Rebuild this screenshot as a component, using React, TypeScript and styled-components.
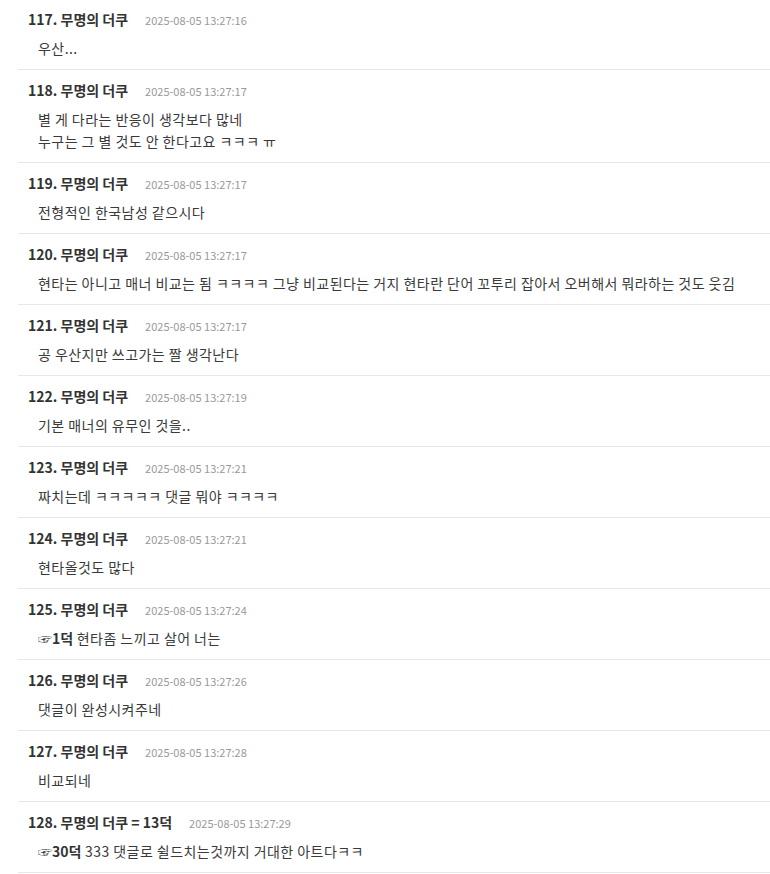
import React from "react";
import styled, { createGlobalStyle } from "styled-components";

const GlobalStyle = createGlobalStyle`
  body {
    margin: 0;
    background: #fff;
    font-family: "Noto Sans CJK KR", "Noto Sans", sans-serif;
  }
`;

const List = styled.ul`
  list-style: none;
  margin: 0;
  padding: 0 0 0 18px;
`;

const Item = styled.li`
  padding: 11px 10px 10px;
  border-bottom: 1px solid #e8e8e8;

  &:first-child {
    padding-top: 10px;
  }
`;

const Header = styled.div`
  display: flex;
  align-items: baseline;
  gap: 17px;
  height: 18px;
  line-height: 18px;
`;

const Author = styled.span`
  font-size: 14px;
  font-weight: bold;
  color: #333;
`;

const Stamp = styled.span`
  font-size: 11px;
  color: #999;
`;

const Body = styled.div`
  margin-top: 9px;
  padding-left: 10px;
  font-size: 14px;
  letter-spacing: 0.45px;
  line-height: 22px;
  color: #3a3a3a;
`;

const Ref = styled.b`
  font-weight: bold;
  letter-spacing: 0;
  color: #333;
`;

type Comment = {
  no: number;
  name: string;
  time: string;
  ref?: string;
  lines: string[];
};

const comments: Comment[] = [
  { no: 117, name: "무명의 더쿠", time: "2025-08-05 13:27:16", lines: ["우산..."] },
  {
    no: 118,
    name: "무명의 더쿠",
    time: "2025-08-05 13:27:17",
    lines: ["별 게 다라는 반응이 생각보다 많네", "누구는 그 별 것도 안 한다고요 ㅋㅋㅋ ㅠ"],
  },
  { no: 119, name: "무명의 더쿠", time: "2025-08-05 13:27:17", lines: ["전형적인 한국남성 같으시다"] },
  {
    no: 120,
    name: "무명의 더쿠",
    time: "2025-08-05 13:27:17",
    lines: ["현타는 아니고 매너 비교는 됨 ㅋㅋㅋㅋ 그냥 비교된다는 거지 현타란 단어 꼬투리 잡아서 오버해서 뭐라하는 것도 웃김"],
  },
  { no: 121, name: "무명의 더쿠", time: "2025-08-05 13:27:17", lines: ["공 우산지만 쓰고가는 짤 생각난다"] },
  { no: 122, name: "무명의 더쿠", time: "2025-08-05 13:27:19", lines: ["기본 매너의 유무인 것을.."] },
  { no: 123, name: "무명의 더쿠", time: "2025-08-05 13:27:21", lines: ["짜치는데 ㅋㅋㅋㅋㅋ 댓글 뭐야 ㅋㅋㅋㅋ"] },
  { no: 124, name: "무명의 더쿠", time: "2025-08-05 13:27:21", lines: ["현타올것도 많다"] },
  { no: 125, name: "무명의 더쿠", time: "2025-08-05 13:27:24", ref: "☞1덕", lines: [" 현타좀 느끼고 살어 너는"] },
  { no: 126, name: "무명의 더쿠", time: "2025-08-05 13:27:26", lines: ["댓글이 완성시켜주네"] },
  { no: 127, name: "무명의 더쿠", time: "2025-08-05 13:27:28", lines: ["비교되네"] },
  {
    no: 128,
    name: "무명의 더쿠 = 13덕",
    time: "2025-08-05 13:27:29",
    ref: "☞30덕",
    lines: [" 333 댓글로 쉴드치는것까지 거대한 아트다ㅋㅋ"],
  },
];

export default function App() {
  return (
    <>
      <GlobalStyle />
      <List>
        {comments.map((c) => (
          <Item key={c.no}>
            <Header>
              <Author>
                {c.no}. {c.name}
              </Author>
              <Stamp>{c.time}</Stamp>
            </Header>
            <Body>
              {c.lines.map((line, i) => (
                <div key={i}>
                  {i === 0 && c.ref && <Ref>{c.ref}</Ref>}
                  {line}
                </div>
              ))}
            </Body>
          </Item>
        ))}
      </List>
    </>
  );
}
